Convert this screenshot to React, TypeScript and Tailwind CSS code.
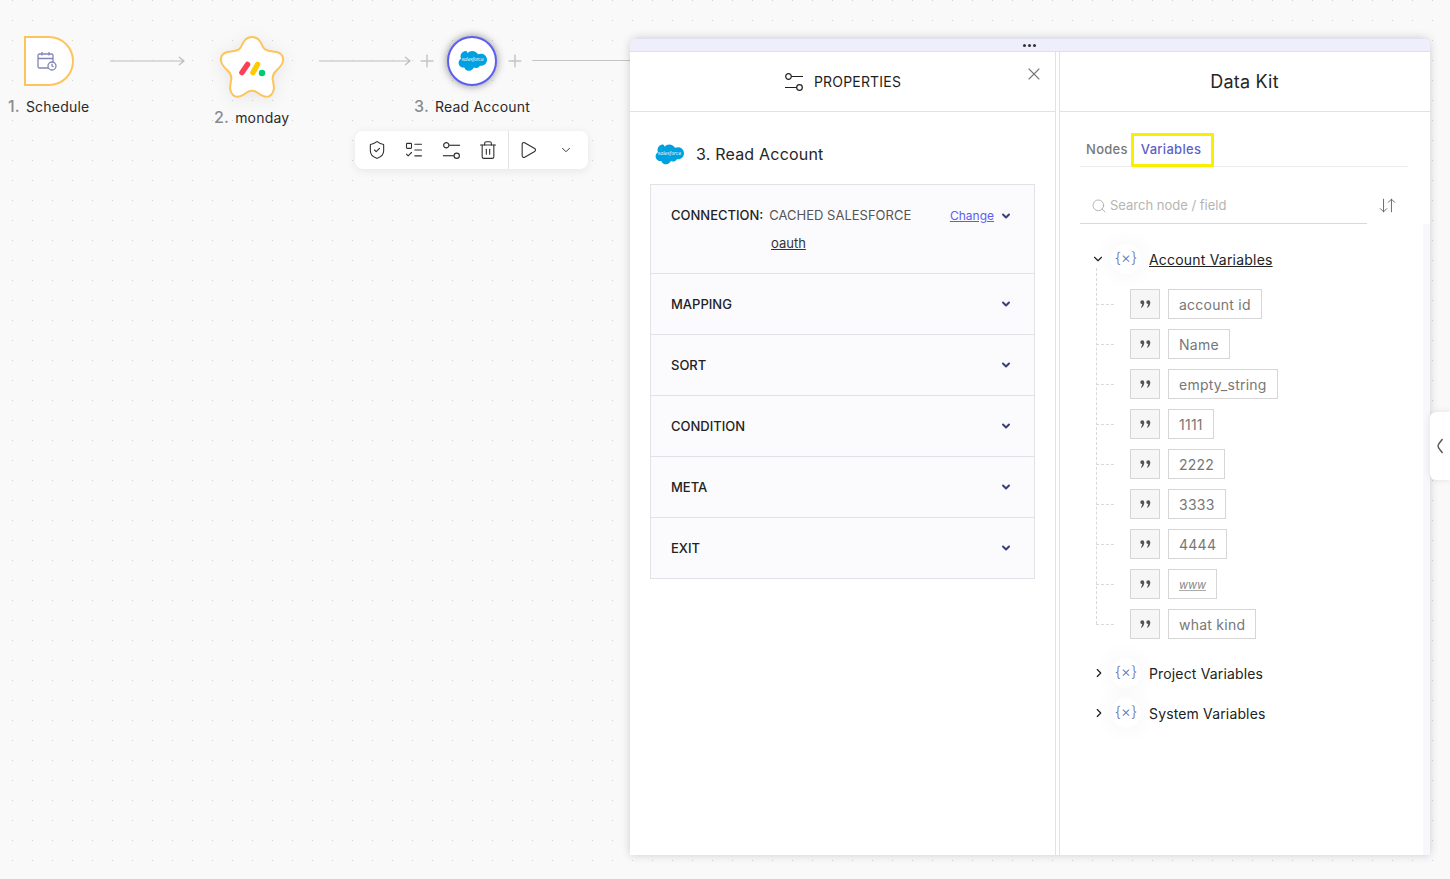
import { ChevronDown, ChevronRight, Search, X, Play, ShieldCheck, ListTodo, Trash2, Plus, ArrowDownUp } from "lucide-react";

const variables = ["account id", "Name", "empty_string", "1111", "2222", "3333", "4444", "www", "what kind"];
const sections = ["MAPPING", "SORT", "CONDITION", "META", "EXIT"];

function SalesforceCloud({ className }: { className?: string }) {
  return (
    <svg viewBox="5 2 39 28" className={className}>
      <path
        fill="#00a1e0"
        d="M18 5.500C19.500 3.600 21.800 2.500 24.300 2.500C27.600 2.500 30.400 4.300 31.900 7C33.200 6.400 34.600 6.100 36 6.100C40.500 6.100 44 9.800 44 14.300C44 18.800 40.500 22.500 36 22.500C35.400 22.500 34.900 22.400 34.400 22.300C33.300 24.200 31.300 25.500 29 25.500C28 25.500 27.100 25.300 26.300 24.900C25.300 27.400 22.800 29.200 20 29.200C17 29.200 14.400 27.300 13.500 24.600C13 24.700 12.600 24.800 12.100 24.800C8.600 24.800 5.800 21.900 5.800 18.400C5.800 16 7.100 14 9 12.900C8.600 12 8.400 11 8.400 10C8.400 5.900 11.700 2.600 15.800 2.600C16.600 2.600 17.400 3.800 18 5.500Z"
      />
      <text x="24.500" y="16.500" textAnchor="middle" fontSize="6" fill="#ffffff" fontFamily="Inter, sans-serif" fontStyle="italic">
        salesforce
      </text>
    </svg>
  );
}

function SlidersIcon({ className }: { className?: string }) {
  return (
    <svg viewBox="0 0 20 20" fill="none" stroke="currentColor" strokeWidth="1.200" className={className}>
      <circle cx="4.500" cy="4.500" r="2.800" />
      <path d="M7.500 4.500H19" />
      <circle cx="15.500" cy="15.500" r="2.800" />
      <path d="M1 15.500H12.500" />
    </svg>
  );
}

function CalendarIcon() {
  return (
    <svg viewBox="0 0 20 20" fill="none" stroke="#8286b4" strokeWidth="1.300" className="mr-[4px] h-[20px] w-[20px]">
      <rect x="1" y="3" width="15" height="14" rx="1.500" />
      <path d="M1 7.500H16M5 1V4.500M12 1V4.500" />
      <circle cx="15" cy="15" r="4" fill="#ffffff" />
      <path d="M15 12.800V15L16.500 16" />
    </svg>
  );
}

function QuoteIcon() {
  const comma = "M0.300 2.200A2 2 0 1 1 4.300 2.200C4.300 4.700 3.200 6.700 1.600 7.800L1 7.200C1.800 6.200 2.200 5.200 2.200 4.100A2 2 0 0 1 0.300 2.200Z";
  return (
    <svg viewBox="0 0 11 8" className="h-[8px] w-[11px]" fill="#555555">
      <path d={comma} />
      <path d={comma} transform="translate(6 0)" />
    </svg>
  );
}

function VarIcon() {
  return (
    <div className="flex h-[30px] w-[30px] shrink-0 items-center justify-center rounded-full bg-white text-[15px] font-light tracking-normal text-[#6b6fa8] shadow-[0_0_24px_rgba(0,0,0,0.05)]">
      <span className="-mt-[1px]">{"{×}"}</span>
    </div>
  );
}

function Arrow({ width }: { width: number }) {
  return (
    <svg width={width} height="10" viewBox={`0 0 ${width} 10`} fill="none" stroke="#bdbdbd" strokeWidth="1.200">
      <path d={`M0 5H${width - 1}M${width - 6} 1L${width - 1} 5L${width - 6} 9`} />
    </svg>
  );
}

function Canvas() {
  return (
    <>
      <div className="absolute left-[24px] top-[36px] flex h-[50px] w-[50px] items-center justify-center rounded-r-[25px] border-2 border-[#fdc45c] bg-white">
        <CalendarIcon />
      </div>
      <div className="absolute left-[8px] top-[94px] flex items-baseline gap-[6px] text-[14px] tracking-[0.2px] text-[#2a2a2a]">
        <span className="text-[16px] font-medium text-[#8b8b8b]">1.</span>
        <span>Schedule</span>
      </div>

      <div className="absolute left-[110px] top-[56px]"><Arrow width={75} /></div>

      <div className="absolute left-[219px] top-[35px] h-[64px] w-[66px]">
        <svg viewBox="0 0 66 64" className="h-full w-full drop-shadow-[0_2px_8px_rgba(0,0,0,0.08)]">
          <path
            fill="#ffffff"
            stroke="#fdc45c"
            strokeWidth="2"
            d="M33 2C40 2 42 8 44 12C46 16 50 16 54 16.500C61 17 65 20 64 26C63.500 30 60 33 57 36C54 39 53 42 54 46C55 51 56 56 52 60C48 64 43 61 39 58C35 55 31 55 27 58C23 61 18 64 14 60C10 56 11 51 12 46C13 42 12 39 9 36C6 33 2.500 30 2 26C1 20 5 17 12 16.500C16 16 20 16 22 12C24 8 26 2 33 2Z"
          />
          <path d="M23 37.500L28.500 29.500" stroke="#fb3f55" strokeWidth="5.500" strokeLinecap="round" />
          <path d="M34 37.500L38.500 29.500" stroke="#ffcb00" strokeWidth="5.500" strokeLinecap="round" />
          <circle cx="43" cy="38" r="3.200" fill="#00ca72" />
        </svg>
      </div>
      <div className="absolute left-[214px] top-[105px] flex items-baseline gap-[6px] text-[14px] tracking-[0.2px] text-[#2a2a2a]">
        <span className="text-[16px] font-medium text-[#8b8b8b]">2.</span>
        <span>monday</span>
      </div>

      <div className="absolute left-[319px] top-[56px]"><Arrow width={92} /></div>
      <Plus className="absolute left-[417px] top-[51px] h-5 w-5 text-[#c4c4c4]" strokeWidth={1.800} />

      <div className="absolute left-[447px] top-[36px] flex h-[50px] w-[50px] items-center justify-center rounded-full border-2 border-[#5b5ff0] bg-white shadow-[0_0_8px_rgba(0,0,0,0.45)]">
        <SalesforceCloud className="h-[22px] w-[29px]" />
      </div>
      <Plus className="absolute left-[505px] top-[51px] h-5 w-5 text-[#c4c4c4]" strokeWidth={1.800} />
      <div className="absolute left-[533px] top-[60px] h-px w-[100px] bg-[#c4c4c4]" />

      <div className="absolute left-[414px] top-[94px] flex items-baseline gap-[6px] text-[14px] tracking-[0.2px] text-[#2a2a2a]">
        <span className="text-[16px] font-medium text-[#8b8b8b]">3.</span>
        <span>Read Account</span>
      </div>

      <div className="absolute left-[355px] top-[131px] flex h-[38px] w-[233px] items-center rounded-lg bg-white text-[#2f2f2f] shadow-[0_2px_10px_rgba(0,0,0,0.08)]">
        <div className="flex h-full w-[154px] items-center justify-between border-r border-[#e2e2e2] pl-[12px] pr-[10px]">
          <ShieldCheck className="h-[20px] w-[20px]" strokeWidth={1.300} />
          <ListTodo className="h-[20px] w-[20px]" strokeWidth={1.300} />
          <SlidersIcon className="h-[19px] w-[19px]" />
          <Trash2 className="h-[20px] w-[20px]" strokeWidth={1.300} />
        </div>
        <div className="flex flex-1 items-center justify-between pl-[9px] pr-[15px]">
          <Play className="h-[20px] w-[20px]" strokeWidth={1.300} />
          <ChevronDown className="h-[14px] w-[14px]" strokeWidth={1.600} />
        </div>
      </div>
    </>
  );
}

function PropertiesPanel() {
  return (
    <div className="flex h-full w-[426px] shrink-0 flex-col border-r border-[#e2e2e2]">
      <div className="relative flex h-[60px] shrink-0 items-center justify-center border-b border-[#e2e2e2]">
        <div className="flex items-center gap-[10px] text-[14px] tracking-[0.2px] text-[#1f1f1f]">
          <SlidersIcon className="h-[20px] w-[20px]" />
          PROPERTIES
        </div>
        <X className="absolute right-[11px] top-[12px] h-[20px] w-[20px] text-[#777777]" strokeWidth={1.300} />
      </div>
      <div className="flex h-[72px] shrink-0 items-center gap-[12px] pl-[25px] pt-[12px] text-[16px] tracking-[0.2px] text-[#262626]">
        <SalesforceCloud className="h-[21px] w-[29px]" />
        3. Read Account
      </div>
      <div className="mx-[20px] w-[385px] border border-[#e2e2e6]">
        <div className="h-[89px] border-b border-[#e2e2e6] bg-[#fbfbfe] pl-[20px] pr-[22px] text-[13px]">
          <div className="flex h-[60px] items-center pt-[2px]">
            <span className="font-medium text-[#222222]">CONNECTION:</span>
            <span className="ml-[6px] text-[#555555]">CACHED SALESFORCE</span>
            <span className="ml-auto text-[12px] text-[#5b5ff0] underline">Change</span>
            <ChevronDown className="ml-[6px] h-[12px] w-[12px] text-[#3a3f78]" strokeWidth={4} />
          </div>
          <div className="-mt-[11px] pl-[100px] text-[#333333] underline">oauth</div>
        </div>
        {sections.map((s, i) => (
          <div key={s} className={`flex items-center justify-between bg-[#fbfbfe] pl-[20px] pr-[22px] pt-[1px] text-[13px] font-medium text-[#222222] ${i < sections.length - 1 ? "h-[61px] border-b border-[#e2e2e6]" : "h-[60px]"}`}>
            {s}
            <ChevronDown className="-mt-[1px] h-[12px] w-[12px] text-[#3a3f78]" strokeWidth={4} />
          </div>
        ))}
      </div>
    </div>
  );
}

function DataKit() {
  return (
    <div className="relative ml-[3px] flex h-full flex-1 flex-col border-l border-[#e2e2e2]">
      <div className="flex h-[60px] shrink-0 items-center justify-center border-b border-[#e2e2e2] pr-[1px] text-[18px] tracking-[0.2px] text-[#262626]">
        Data Kit
      </div>
      <div className="absolute bottom-0 right-0 top-[172px] w-[7px] bg-[#f7f7fc]" />
      <div className="ml-[20px] mt-[21px] flex h-[34px] w-[328px] items-center border-b border-[#ececec] pl-[6px] text-[13px] tracking-[0.3px]">
        <span className="font-medium text-[#777777]">Nodes</span>
        <span className="ml-[3px] flex h-[34px] w-[83px] items-center border-[3px] border-[#f8f000] pl-[7px] font-medium text-[#5e62c8]">Variables</span>
      </div>
      <div className="ml-[20px] mt-[22px] flex items-center">
        <div className="flex h-[35px] w-[287px] items-center gap-[3px] border-b border-[#d9d9d9] pl-[11px] text-[13px] text-[#b5b5b5]">
          <Search className="h-[16px] w-[16px] text-[#a8a8a8]" strokeWidth={1.300} />
          Search node / field
        </div>
        <ArrowDownUp className="-mt-[2px] ml-[11px] h-[19px] w-[19px] text-[#666666]" strokeWidth={1.200} />
      </div>
      <div className="ml-[31px] mt-[20px] flex h-[30px] items-center text-[14px] tracking-[0.2px] text-[#222222]">
        <ChevronDown className="mr-[6px] h-[14px] w-[14px]" strokeWidth={2} />
        <VarIcon />
        <span className="ml-[8px] underline">Account Variables</span>
      </div>
      <div className="relative ml-[36px] mt-[12px] flex flex-col gap-[10px] pt-[3px]">
        <div className="absolute bottom-[15px] left-0 top-[-18px] border-l border-dashed border-[#d9d9d9]" />
        {variables.map((v) => (
          <div key={v} className="flex h-[30px] items-center">
            <div className="w-[18px] border-t border-dashed border-[#d9d9d9]" />
            <div className="ml-[16px] flex h-[30px] w-[30px] items-center justify-center border border-[#d6d6d6] bg-[#f6f6f6]">
              <QuoteIcon />
            </div>
            {v === "www" ? (
              <div className="ml-[8px] flex h-[30px] items-center border border-[#d6d6d6] px-[10px] pt-[3px] text-[11px] italic text-[#8a8a8a] underline decoration-[#aaaaaa]">
                {v}
              </div>
            ) : (
              <div className="ml-[8px] flex h-[30px] items-center border border-[#d6d6d6] px-[10px] text-[14px] tracking-[0.25px] text-[#777777]">
                {v}
              </div>
            )}
          </div>
        ))}
      </div>
      {["Project Variables", "System Variables"].map((s, i) => (
        <div key={s} className={`ml-[32px] flex h-[30px] items-center text-[14px] tracking-[0.15px] text-[#222222] ${i === 0 ? "mt-[19px]" : "mt-[10px]"}`}>
          <ChevronRight className="mr-[5px] h-[14px] w-[14px]" strokeWidth={2} />
          <VarIcon />
          <span className="ml-[8px]">{s}</span>
        </div>
      ))}
    </div>
  );
}

export default function App() {
  return (
    <div className="relative h-[879px] w-full overflow-hidden bg-[#f9f9f9] bg-[radial-gradient(circle_at_12.500px_0.500px,#d0d0d0_0.700px,transparent_1px)] bg-[length:20px_20px] font-['Inter',sans-serif]">
      <Canvas />
      <div className="absolute left-[630px] top-[38px] flex h-[817px] w-[800px] flex-col overflow-hidden rounded-t-lg bg-white shadow-[0_0_10px_rgba(0,0,0,0.18)]">
        <div className="flex h-[14px] shrink-0 items-center justify-center gap-[2px] border-y border-y-[#e0e0ea] bg-[#eeeefc] pr-[2px]">
          <span className="h-[3px] w-[3px] rounded-full bg-[#333333]" />
          <span className="h-[3px] w-[3px] rounded-full bg-[#333333]" />
          <span className="h-[3px] w-[3px] rounded-full bg-[#333333]" />
        </div>
        <div className="flex min-h-0 flex-1">
          <PropertiesPanel />
          <DataKit />
        </div>
      </div>
      <div className="absolute left-[1430px] top-[412px] flex h-[68px] w-[20px] items-center justify-center rounded-l-md bg-white shadow-[0_0_6px_rgba(0,0,0,0.1)]">
        <svg viewBox="0 0 8 16" fill="none" stroke="#555555" strokeWidth="1.400" className="h-[16px] w-[8px]">
          <path d="M6.500 1C4.500 4 2 6 2 8C2 10 4.500 12 6.500 15" />
        </svg>
      </div>
    </div>
  );
}
